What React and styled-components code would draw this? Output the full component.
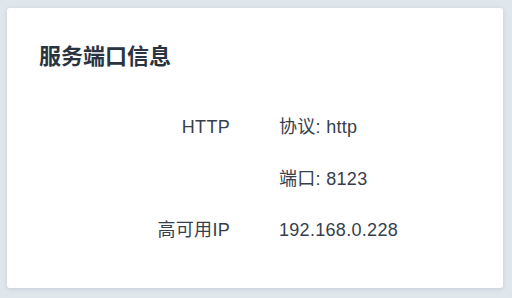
import React from "react";
import styled, { createGlobalStyle } from "styled-components";

const Global = createGlobalStyle`
  html, body { margin: 0; padding: 0; background: #dfe6ec; }
  body { font-family: "Liberation Sans", "Noto Sans CJK SC", sans-serif; }
`;

const Page = styled.div`
  padding: 8px 9px 10px 7px;
`;

const Card = styled.div`
  background: #ffffff;
  border-radius: 3px;
  box-shadow: 0 1px 4px rgba(120, 140, 160, 0.25);
  height: 280px;
  box-sizing: border-box;
  padding: 31px 32px 0 32px;
`;

const Title = styled.h2`
  margin: 0;
  font-family: "Noto Sans CJK SC", sans-serif;
  font-size: 22px;
  font-weight: 700;
  line-height: 30px;
  color: #2a3441;
`;

const Grid = styled.div`
  margin-top: 46px;
  display: grid;
  grid-template-columns: 191px 1fr;
  column-gap: 49px;
  row-gap: 26.5px;
`;

const Label = styled.div`
  text-align: right;
  font-size: 18px;
  line-height: 25px;
  letter-spacing: 0.3px;
  color: #36404c;
`;

const Value = styled.div`
  font-size: 18px;
  line-height: 25px;
  letter-spacing: 0.3px;
  color: #36404c;
`;

const rows = [
  ["HTTP", "协议: http"],
  ["", "端口: 8123"],
  ["高可用IP", "192.168.0.228"],
];

export default function App() {
  return (
    <>
      <Global />
      <Page>
        <Card>
          <Title>服务端口信息</Title>
          <Grid>
            {rows.map(([l, v], i) => (
              <React.Fragment key={i}>
                <Label>{l}</Label>
                <Value>{v}</Value>
              </React.Fragment>
            ))}
          </Grid>
        </Card>
      </Page>
    </>
  );
}
